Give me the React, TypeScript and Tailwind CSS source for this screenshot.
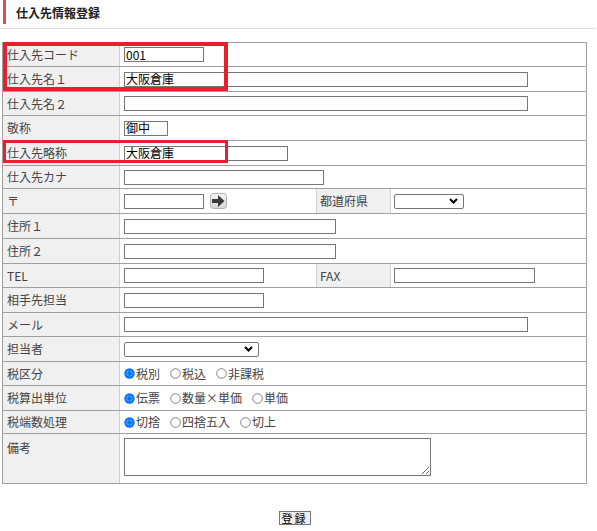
import React from "react";

const font = { fontFamily: '"Noto Sans CJK JP", "Noto Sans", sans-serif' };

function TextBox({ w, value }: { w: string; value?: string }) {
  return (
    <div
      className={`${w} h-[15px] border border-[#767676] bg-white flex items-center pl-[1px] text-[12px] leading-none text-black overflow-hidden`}
    >
      {value}
    </div>
  );
}

function Select({ w }: { w: string }) {
  return (
    <div className={`${w} h-[15px] border border-[#767676] rounded-[2px] bg-white flex items-center justify-end pr-[5px]`}>
      <svg width="9" height="6" viewBox="0 0 9 6">
        <path d="M1 1 L4.5 4.5 L8 1" fill="none" stroke="#000" strokeWidth="2" />
      </svg>
    </div>
  );
}

function Radio({ checked }: { checked?: boolean }) {
  return checked ? (
    <svg width="11" height="11" viewBox="0 0 11 11" className="shrink-0">
      <circle cx="5.5" cy="5.5" r="5.2" fill="#0075ff" />
      <circle cx="5.5" cy="5.5" r="2.8" fill="#fff" />
      <circle cx="5.5" cy="5.5" r="2.5" fill="#0075ff" />
    </svg>
  ) : (
    <svg width="11" height="11" viewBox="0 0 11 11" className="shrink-0">
      <circle cx="5.5" cy="5.5" r="4.8" fill="#fff" stroke="#767676" strokeWidth="0.9" />
    </svg>
  );
}

function RadioGroup({ items }: { items: { label: string; checked?: boolean }[] }) {
  return (
    <div className="flex items-center gap-[10px] text-[12px] text-[#444]">
      {items.map((it) => (
        <div key={it.label} className="flex items-center">
          <Radio checked={it.checked} />
          <span className="ml-[1px]">{it.label}</span>
        </div>
      ))}
    </div>
  );
}

function Row({
  h,
  label,
  children,
  last,
  top,
}: {
  h: string;
  label: string;
  children?: React.ReactNode;
  last?: boolean;
  top?: boolean;
}) {
  return (
    <div className={`${h} flex ${last ? "" : "border-b border-[#a0a0a0]"}`}>
      <div
        className={`w-[117px] shrink-0 bg-[#f0f0f0] border-r border-[#d0d0d0] pl-[4px] text-[12px] text-[#444] flex ${
          top ? "items-start pt-[5px]" : "items-center"
        }`}
      >
        {label}
      </div>
      <div className={`flex-1 flex ${top ? "items-start pt-[4px]" : "items-center"} pl-[4px]`}>{children}</div>
    </div>
  );
}

function SplitRow({
  h,
  label,
  left,
  sub,
  right,
}: {
  h: string;
  label: string;
  left: React.ReactNode;
  sub: string;
  right: React.ReactNode;
}) {
  return (
    <div className={`${h} flex border-b border-[#a0a0a0]`}>
      <div className="w-[117px] shrink-0 bg-[#f0f0f0] border-r border-[#d0d0d0] pl-[4px] text-[12px] text-[#444] flex items-center">
        {label}
      </div>
      <div className="w-[197px] shrink-0 flex items-center pl-[4px] border-r border-[#d0d0d0]">{left}</div>
      <div className="w-[74px] shrink-0 bg-[#f0f0f0] border-r border-[#d0d0d0] pl-[3px] text-[12px] text-[#444] flex items-center">
        {sub}
      </div>
      <div className="flex-1 flex items-center pl-[3px]">{right}</div>
    </div>
  );
}

function ArrowButton() {
  return (
    <svg width="17" height="16" viewBox="0 0 17 16" className="ml-[6px]">
      <defs>
        <linearGradient id="ag" x1="0" y1="0" x2="0" y2="1">
          <stop offset="0" stopColor="#f4f4f4" />
          <stop offset="1" stopColor="#d6d6d6" />
        </linearGradient>
      </defs>
      <rect x="0.5" y="0.5" width="16" height="15" rx="3" fill="url(#ag)" stroke="#b0b0b0" />
      <path d="M2 6 H8 V2 L14.5 8 L8 14 V10 H2 Z" fill="#3a3a3a" />
    </svg>
  );
}

export default function App() {
  return (
    <div className="relative w-[597px] h-[531px] bg-white" style={font}>
      {/* header */}
      <div className="flex items-center h-[24px]">
        <div className="ml-[3px] w-[3px] h-[24px] bg-[#e5475a]" />
        <div className="ml-[10px] text-[12px] font-bold text-[#222] mt-[1px]">仕入先情報登録</div>
      </div>
      <div className="mt-[4px] h-[1px] bg-[#dcdcdc] w-[596px]" />

      {/* form table */}
      <div className="mt-[13px] ml-[2px] w-[585px] border border-[#a0a0a0]">
        <Row h="h-[24px]" label="仕入先コード">
          <TextBox w="w-[80px]" value="001" />
        </Row>
        <Row h="h-[25px]" label="仕入先名１">
          <TextBox w="w-[404px]" value="大阪倉庫" />
        </Row>
        <Row h="h-[24px]" label="仕入先名２">
          <TextBox w="w-[404px]" />
        </Row>
        <Row h="h-[25px]" label="敬称">
          <TextBox w="w-[44px]" value="御中" />
        </Row>
        <Row h="h-[25px]" label="仕入先略称">
          <TextBox w="w-[164px]" value="大阪倉庫" />
        </Row>
        <Row h="h-[23px]" label="仕入先カナ">
          <TextBox w="w-[200px]" />
        </Row>
        <SplitRow
          h="h-[25px]"
          label="〒"
          left={
            <>
              <TextBox w="w-[80px]" />
              <ArrowButton />
            </>
          }
          sub="都道府県"
          right={<Select w="w-[70px]" />}
        />
        <Row h="h-[25px]" label="住所１">
          <TextBox w="w-[212px]" />
        </Row>
        <Row h="h-[25px]" label="住所２">
          <TextBox w="w-[212px]" />
        </Row>
        <SplitRow
          h="h-[24px]"
          label="TEL"
          left={<TextBox w="w-[140px]" />}
          sub="FAX"
          right={<TextBox w="w-[141px]" />}
        />
        <Row h="h-[25px]" label="相手先担当">
          <TextBox w="w-[140px]" />
        </Row>
        <Row h="h-[24px]" label="メール">
          <TextBox w="w-[404px]" />
        </Row>
        <Row h="h-[25px]" label="担当者">
          <Select w="w-[135px]" />
        </Row>
        <Row h="h-[24px]" label="税区分">
          <RadioGroup items={[{ label: "税別", checked: true }, { label: "税込" }, { label: "非課税" }]} />
        </Row>
        <Row h="h-[25px]" label="税算出単位">
          <RadioGroup items={[{ label: "伝票", checked: true }, { label: "数量×単価" }, { label: "単価" }]} />
        </Row>
        <Row h="h-[23px]" label="税端数処理">
          <RadioGroup items={[{ label: "切捨", checked: true }, { label: "四捨五入" }, { label: "切上" }]} />
        </Row>
        <Row h="h-[49px]" label="備考" last top>
          <textarea className="w-[307px] h-[38px] border border-[#767676] bg-white outline-none" />
        </Row>
      </div>

      {/* submit */}
      <div className="w-[589px] flex justify-center mt-[27px]">
        <button className="h-[14px] px-[2px] border border-[#767676] bg-[#efefef] text-[11px] leading-none text-black tracking-[2px] flex items-center">
          登録
        </button>
      </div>

      {/* red highlight boxes */}
      <div className="absolute left-[3px] top-[42px] w-[225px] h-[49px] border-[4px] border-[#e8202e]" />
      <div className="absolute left-[3px] top-[140px] w-[225px] h-[23px] border-[3px] border-[#e8202e]" />
    </div>
  );
}
